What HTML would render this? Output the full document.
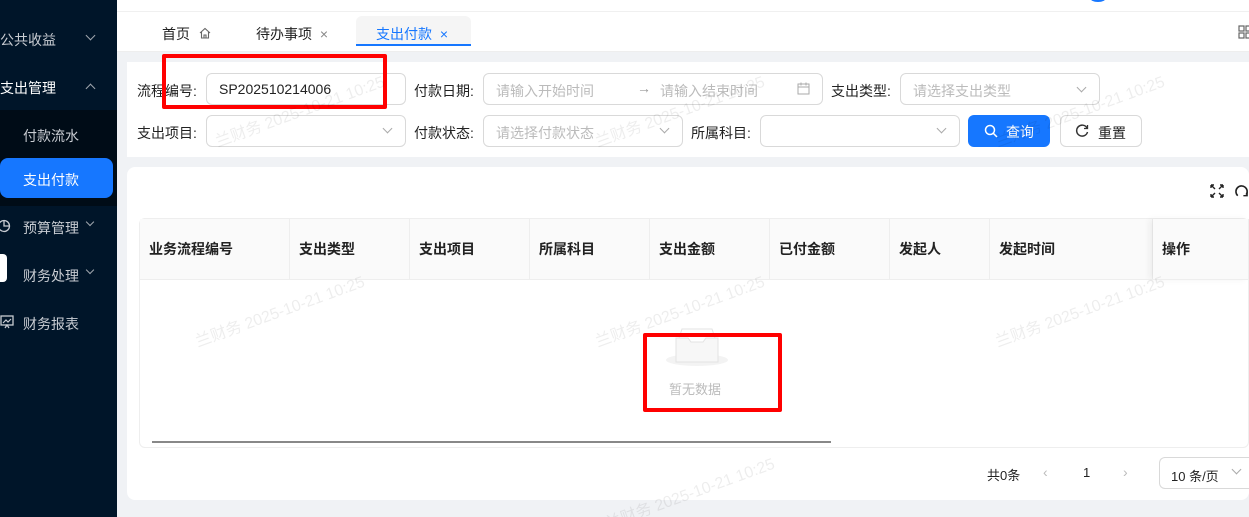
<!DOCTYPE html>
<html><head><meta charset="utf-8"><style>
*{box-sizing:border-box;margin:0;padding:0}
html,body{width:1249px;height:517px;overflow:hidden}
body{background:#f0f2f5;font-family:"Liberation Sans","Noto Sans CJK SC",sans-serif;font-size:14px;color:#222;position:relative}
.abs{position:absolute}
.side{left:0;top:0;width:117px;height:517px;background:#001529}
.si{position:absolute;color:#c8ccd2;font-size:14px}
.chev{position:absolute;width:7px;height:7px;border-right:1.3px solid #a0a6ae;border-bottom:1.3px solid #a0a6ae;transform:rotate(45deg)}
.inp{position:absolute;height:32px;border:1px solid #d9d9d9;border-radius:6px;background:#fff;font-size:14px;color:#bbb;padding:7px 12px;white-space:nowrap}
.lbl{position:absolute;font-size:14px;color:#222}
.dd{position:absolute;width:7px;height:7px;border-right:1px solid #aaa;border-bottom:1px solid #aaa;transform:rotate(45deg)}
.th{position:absolute;top:219px;height:61px;line-height:61px;font-weight:bold;font-size:14px;padding-left:9px;border-right:1px solid #eee;background:#fafafa}
.wm{position:absolute;color:rgba(0,0,0,0.07);font-size:16px;transform:rotate(-20deg);white-space:nowrap}
svg{position:absolute}
</style></head><body>
<div class="abs side"></div>
<div class="si" style="left:0;top:30px">公共收益</div><div class="chev" style="left:87px;top:32px"></div>
<div class="si" style="left:0;top:78px;color:#fff">支出管理</div><div class="chev" style="left:87px;top:85px;transform:rotate(225deg)"></div>
<div class="abs" style="left:0;top:110px;width:117px;height:96px;background:#000c17"></div>
<div class="si" style="left:23px;top:126px">付款流水</div>
<div class="abs" style="left:0;top:158px;width:113px;height:40px;background:#1677ff;border-radius:8px"></div>
<div class="si" style="left:23px;top:170px;color:#fff">支出付款</div>
<svg style="left:0;top:219px" width="12" height="14" viewBox="0 0 12 14"><circle cx="4" cy="7" r="5.5" fill="none" stroke="#c8ccd2" stroke-width="1.3"/><path d="M4 1.5V7H9.5" fill="none" stroke="#c8ccd2" stroke-width="1.3"/></svg>
<div class="si" style="left:23px;top:218px">预算管理</div><div class="chev" style="left:87px;top:219px;width:6px;height:6px"></div>
<div class="abs" style="left:0;top:254px;width:7px;height:28px;background:#fff;border-radius:0 4px 4px 0"></div>
<div class="si" style="left:23px;top:266px">财务处理</div><div class="chev" style="left:87px;top:267px;width:6px;height:6px"></div>
<svg style="left:0;top:315px" width="14" height="14" viewBox="0 0 14 14"><rect x="1" y="1" width="12" height="9" fill="none" stroke="#c8ccd2" stroke-width="1.3"/><path d="M3 8l3-3 2 2 3-3M5 13l2-3 2 3" fill="none" stroke="#c8ccd2" stroke-width="1.2"/></svg>
<div class="si" style="left:23px;top:314px">财务报表</div>
<div class="abs" style="left:117px;top:0;width:1132px;height:52px;background:#fff;border-bottom:1px solid #eee"></div>
<div class="abs" style="left:117px;top:11px;width:1132px;height:1px;background:#f0f0f0"></div>
<div class="abs" style="left:1090px;top:-6px;width:16px;height:8px;border-radius:50%;background:#1677ff"></div>
<div class="lbl" style="left:162px;top:24px">首页</div>
<svg style="left:199px;top:27px" width="12" height="12" viewBox="0 0 12 12"><path d="M1 6L6 1.5 11 6M2.5 5v6h7V5M5 11V8h2v3" fill="none" stroke="#666" stroke-width="1.1"/></svg>
<div class="lbl" style="left:256px;top:24px">待办事项 <span style="color:#888;margin-left:4px">×</span></div>
<div class="abs" style="left:356px;top:16px;width:115px;height:30px;background:#f5f5f5;border-bottom:2px solid #1677ff;border-radius:6px 6px 0 0"></div>
<div class="lbl" style="left:376px;top:24px;color:#1677ff">支出付款 <span style="margin-left:4px">×</span></div>
<svg style="left:1238px;top:25px" width="12" height="14" viewBox="0 0 12 14"><rect x="1" y="1" width="5" height="5" fill="none" stroke="#666" stroke-width="1.2"/><rect x="8" y="1" width="5" height="5" fill="none" stroke="#666" stroke-width="1.2"/><rect x="1" y="8" width="5" height="5" fill="none" stroke="#666" stroke-width="1.2"/><rect x="8" y="8" width="5" height="5" fill="none" stroke="#666" stroke-width="1.2"/></svg>
<div class="abs" style="left:127px;top:62px;width:1122px;height:95px;background:#fff"></div>
<div class="lbl" style="left:137px;top:81px">流程编号:</div>
<div class="inp" style="left:206px;top:73px;width:200px;color:#222">SP202510214006</div>
<div class="lbl" style="left:414px;top:81px">付款日期:</div>
<div class="inp" style="left:483px;top:73px;width:340px">请输入开始时间</div>
<div class="lbl" style="left:637px;top:80px;color:#999">→</div>
<div class="lbl" style="left:660px;top:81px;color:#bbb">请输入结束时间</div>
<svg style="left:797px;top:82px" width="13" height="13" viewBox="0 0 13 13"><rect x="1" y="2" width="11" height="10" fill="none" stroke="#aaa"/><path d="M1 5h11M4 0.5v3M9 0.5v3" stroke="#aaa"/></svg>
<div class="lbl" style="left:831px;top:81px">支出类型:</div>
<div class="inp" style="left:900px;top:73px;width:200px">请选择支出类型</div><div class="dd" style="left:1078px;top:84px"></div>
<div class="lbl" style="left:137px;top:123px">支出项目:</div>
<div class="inp" style="left:206px;top:115px;width:200px"></div><div class="dd" style="left:384px;top:125px"></div>
<div class="lbl" style="left:414px;top:123px">付款状态:</div>
<div class="inp" style="left:483px;top:115px;width:200px">请选择付款状态</div><div class="dd" style="left:661px;top:125px"></div>
<div class="lbl" style="left:691px;top:123px">所属科目:</div>
<div class="inp" style="left:760px;top:115px;width:200px"></div><div class="dd" style="left:938px;top:125px"></div>
<div class="abs" style="left:968px;top:115px;width:82px;height:32px;background:#1677ff;border-radius:6px;color:#fff;padding:7px 0 0 38px">查询</div>
<svg style="left:984px;top:124px" width="14" height="14" viewBox="0 0 14 14"><circle cx="6" cy="6" r="4.5" fill="none" stroke="#fff" stroke-width="1.5"/><path d="M9.5 9.5L13 13" stroke="#fff" stroke-width="1.5"/></svg>
<div class="abs" style="left:1060px;top:115px;width:82px;height:32px;border:1px solid #d9d9d9;border-radius:6px;padding:7px 0 0 37px">重置</div>
<svg style="left:1075px;top:124px" width="14" height="14" viewBox="0 0 14 14"><path d="M12 4A5.5 5.5 0 1 0 12.5 8" fill="none" stroke="#333" stroke-width="1.5"/><path d="M12.5 1v3.5H9" fill="none" stroke="#333" stroke-width="1.3"/></svg>
<div class="abs" style="left:162px;top:54px;width:225px;height:55px;border:4px solid #f00;border-radius:2px"></div>
<div class="abs" style="left:127px;top:167px;width:1122px;height:333px;background:#fff;border-radius:8px"></div>
<svg style="left:1210px;top:184px" width="14" height="14" viewBox="0 0 14 14"><path d="M1 1l4 4M13 1l-4 4M1 13l4-4M13 13l-4-4M1 1v3M1 1h3M13 1v3M13 1h-3M1 13v-3M1 13h3M13 13v-3M13 13h-3" stroke="#222" stroke-width="1.4" fill="none"/></svg>
<svg style="left:1234px;top:183px" width="15" height="16" viewBox="0 0 16 16"><path d="M4 13A6 6 0 1 1 13 12" fill="none" stroke="#222" stroke-width="1.7"/><path d="M14 9v4h-4" fill="none" stroke="#222" stroke-width="1.5"/></svg>
<div class="abs" style="left:139px;top:218px;width:1110px;height:230px;border:1px solid #eee;border-radius:6px"></div>
<div class="th" style="left:140px;width:150px">业务流程编号</div>
<div class="th" style="left:290px;width:120px">支出类型</div>
<div class="th" style="left:410px;width:120px">支出项目</div>
<div class="th" style="left:530px;width:120px">所属科目</div>
<div class="th" style="left:650px;width:120px">支出金额</div>
<div class="th" style="left:770px;width:120px">已付金额</div>
<div class="th" style="left:890px;width:100px">发起人</div>
<div class="th" style="left:990px;width:163px">发起时间</div>
<div class="th" style="left:1153px;width:96px;box-shadow:-4px 0 6px rgba(0,0,0,.05)">操作</div>
<div class="abs" style="left:140px;top:279px;width:1109px;height:1px;background:#eee"></div>
<svg style="left:664px;top:326px" width="66" height="42" viewBox="0 0 66 42"><ellipse cx="33" cy="34" rx="31" ry="6" fill="#f3f3f3"/><path d="M12 12h12l3 4h12l3-4h12v24H12z" fill="#f7f7f7" stroke="#e3e3e3"/><path d="M15 12l3-9h30l3 9" fill="none" stroke="#e3e3e3"/></svg>
<div class="lbl" style="left:669px;top:379px;color:#bbb;font-size:13px">暂无数据</div>
<div class="abs" style="left:643px;top:333px;width:139px;height:79px;border:4px solid #f00;border-radius:2px"></div>
<div class="abs" style="left:152px;top:441px;width:679px;height:2px;background:#888"></div>
<div class="lbl" style="left:987px;top:465px;font-size:13px">共0条</div>
<div class="lbl" style="left:1043px;top:464px;color:#bbb">‹</div>
<div class="lbl" style="left:1083px;top:465px;font-size:13px">1</div>
<div class="lbl" style="left:1123px;top:464px;color:#bbb">›</div>
<div class="inp" style="left:1159px;top:457px;width:90px;color:#222;font-size:13px;padding:8px 11px;border-right:none;border-radius:6px 0 0 6px">10 条/页</div><div class="dd" style="left:1233px;top:466px"></div>
<div class="wm" style="left:210px;top:98px">兰财务 2025-10-21 10:25</div>
<div class="wm" style="left:590px;top:98px">兰财务 2025-10-21 10:25</div>
<div class="wm" style="left:990px;top:98px">兰财务 2025-10-21 10:25</div>
<div class="wm" style="left:190px;top:298px">兰财务 2025-10-21 10:25</div>
<div class="wm" style="left:590px;top:298px">兰财务 2025-10-21 10:25</div>
<div class="wm" style="left:990px;top:298px">兰财务 2025-10-21 10:25</div>
<div class="wm" style="left:600px;top:480px">兰财务 2025-10-21 10:25</div>
</body></html>
